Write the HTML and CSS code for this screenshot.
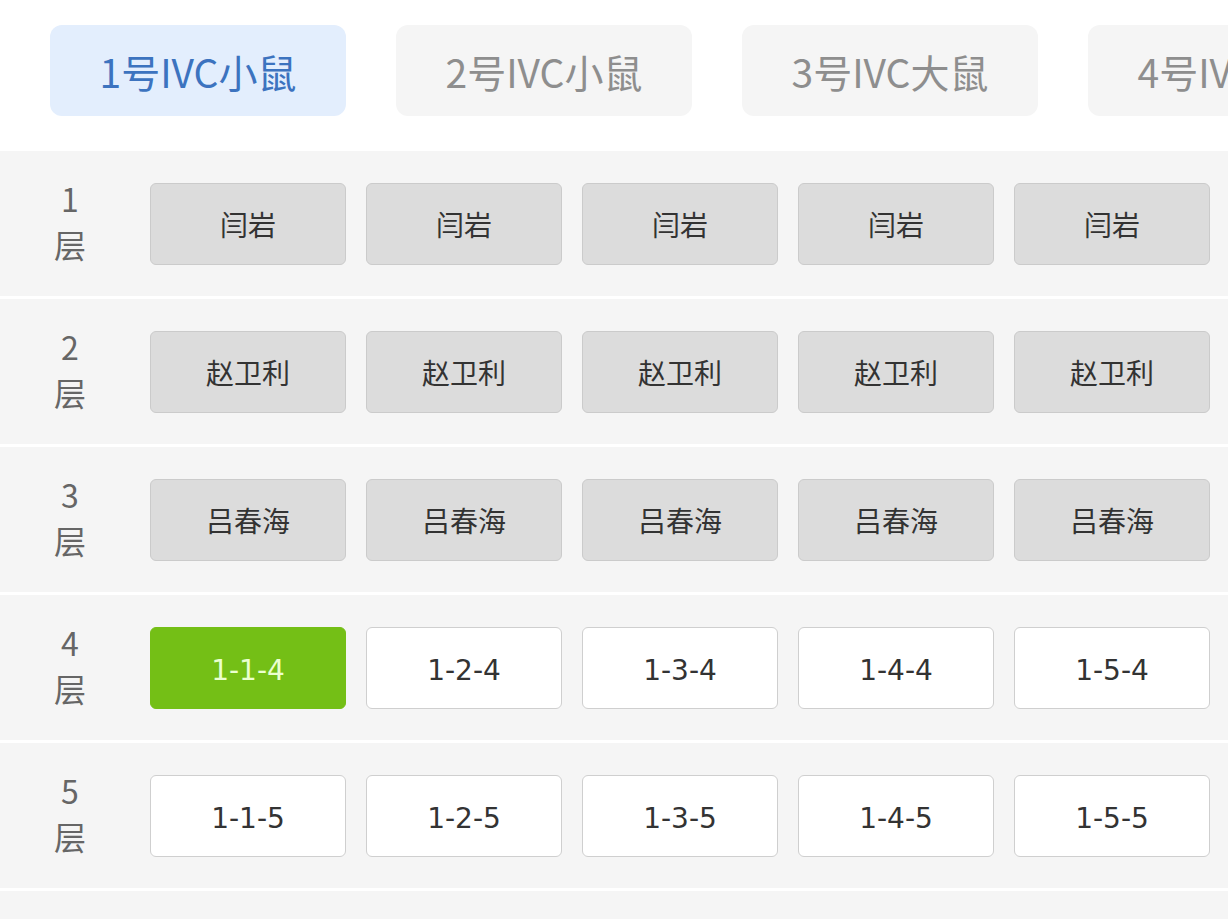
FILE: index.html
```html
<!DOCTYPE html>
<html lang="zh-CN">
<head>
    <meta charset="UTF-8">
    <meta name="viewport" content="width=device-width, initial-scale=1.0">
    <title>IVC 笼位</title>
    <link rel="stylesheet" href="styles.css">
</head>
<body>
    <!-- Rack tabs -->
    <div class="tabs">
        <div class="tab active">1号IVC小鼠</div>
        <div class="tab">2号IVC小鼠</div>
        <div class="tab">3号IVC大鼠</div>
        <div class="tab">4号IVC小鼠</div>
    </div>

    <!-- Floors -->
    <div class="floors">
        <div class="floor">
            <div class="floor-label"><span>1</span><span>层</span></div>
            <div class="cell taken">闫岩</div>
            <div class="cell taken">闫岩</div>
            <div class="cell taken">闫岩</div>
            <div class="cell taken">闫岩</div>
            <div class="cell taken">闫岩</div>
        </div>
        <div class="floor">
            <div class="floor-label"><span>2</span><span>层</span></div>
            <div class="cell taken">赵卫利</div>
            <div class="cell taken">赵卫利</div>
            <div class="cell taken">赵卫利</div>
            <div class="cell taken">赵卫利</div>
            <div class="cell taken">赵卫利</div>
        </div>
        <div class="floor">
            <div class="floor-label"><span>3</span><span>层</span></div>
            <div class="cell taken">吕春海</div>
            <div class="cell taken">吕春海</div>
            <div class="cell taken">吕春海</div>
            <div class="cell taken">吕春海</div>
            <div class="cell taken">吕春海</div>
        </div>
        <div class="floor">
            <div class="floor-label"><span>4</span><span>层</span></div>
            <div class="cell selected">1-1-4</div>
            <div class="cell">1-2-4</div>
            <div class="cell">1-3-4</div>
            <div class="cell">1-4-4</div>
            <div class="cell">1-5-4</div>
        </div>
        <div class="floor">
            <div class="floor-label"><span>5</span><span>层</span></div>
            <div class="cell">1-1-5</div>
            <div class="cell">1-2-5</div>
            <div class="cell">1-3-5</div>
            <div class="cell">1-4-5</div>
            <div class="cell">1-5-5</div>
        </div>
        <div class="floor"></div>
    </div>
</body>
</html>
```

FILE: styles.css
```css
html, body {
    margin: 0;
    padding: 0;
    background: #fff;
    font-family: "Noto Sans CJK SC", "Noto Sans", sans-serif;
    overflow: hidden;
}
.tabs {
    display: flex;
    gap: 50px;
    padding: 25px 0 0 50px;
    height: 151px;
    box-sizing: border-box;
    white-space: nowrap;
    overflow: hidden;
}
.tab {
    flex: 0 0 296px;
    height: 91px;
    border-radius: 12px;
    background: #f5f5f5;
    color: #8e8e8e;
    font-size: 39px;
    display: flex;
    align-items: center;
    justify-content: center;
}
.tab.active {
    background: #e3eefd;
    color: #3c73bf;
}
.floors {
    display: flex;
    flex-direction: column;
    gap: 3px;
}
.floor {
    display: flex;
    align-items: center;
    gap: 20px;
    height: 145px;
    background: #f5f5f5;
    flex-shrink: 0;
}
.floor-label {
    width: 140px;
    margin-right: -10px;
    padding-bottom: 6px;
    display: flex;
    flex-direction: column;
    align-items: center;
    color: #666;
    font-size: 32px;
    line-height: 46px;
}
.floor-label span {
    display: block;
}
.cell {
    flex: 0 0 196px;
    height: 82px;
    box-sizing: border-box;
    padding-top: 5px;
    border: 1px solid #cfcfcf;
    border-radius: 6px;
    background: #fff;
    color: #333;
    font-family: "DejaVu Sans", "Noto Sans CJK SC", sans-serif;
    font-size: 28px;
    display: flex;
    align-items: center;
    justify-content: center;
}
.cell.taken {
    padding-top: 0;
    background: #dcdcdc;
    border-color: #cbcbcb;
    font-family: "Noto Sans CJK SC", sans-serif;
}
.cell.selected {
    background: #74bf16;
    border-color: #74bf16;
    color: #eaffcf;
}
```
